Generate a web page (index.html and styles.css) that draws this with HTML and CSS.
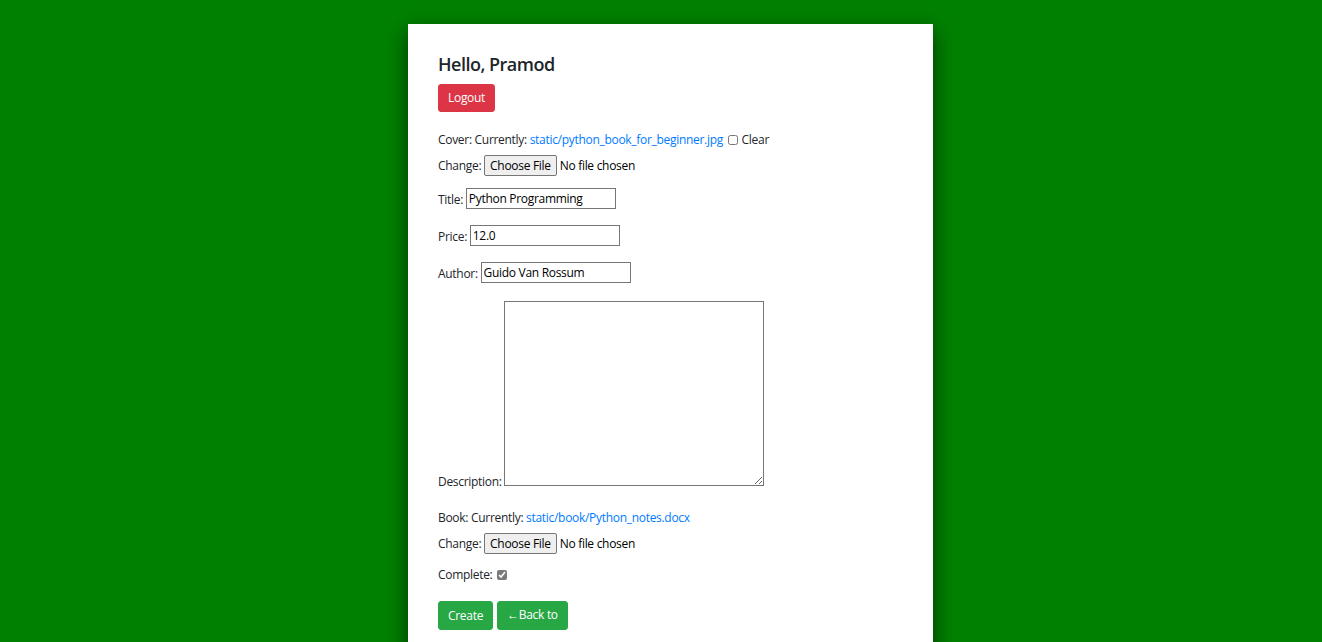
FILE: index.html
```html
<!DOCTYPE html>
<html lang="en">
<head>
<meta charset="utf-8">
<title>Edit book</title>
<link rel="stylesheet" href="styles.css">
</head>
<body>
<div class="card">
  <h4 class="greet">Hello, Pramod</h4>
  <a class="btn btn-red" href="#">Logout</a>
  <form class="form">
    <p class="row">Cover: Currently: <a class="link" href="#">static/python_book_for_beginner.jpg</a> <input class="check" type="checkbox" id="clear"> <label for="clear">Clear</label><br>
    Change: <input class="file" type="file"></p>
    <p class="row">Title: <input class="text" type="text" value="Python Programming"></p>
    <p class="row">Price: <input class="text" type="text" value="12.0"></p>
    <p class="row">Author: <input class="text" type="text" value="Guido Van Rossum"></p>
    <p class="row desc">Description: <textarea class="area"></textarea></p>
    <p class="row">Book: Currently: <a class="link" href="#">static/book/Python_notes.docx</a><br>
    Change: <input class="file" type="file"></p>
    <p class="row">Complete: <input class="check done" type="checkbox" checked></p>
    <div class="actions">
      <button class="btn btn-green" type="button">Create</button>
      <a class="btn btn-green" href="#">&larr;Back to</a>
    </div>
  </form>
</div>
</body>
</html>
```

FILE: styles.css
```css
html, body {
  margin: 0;
  padding: 0;
}
body {
  background: #008000;
  padding-left: 19px;
  font-family: "Open Sans", "Noto Sans", sans-serif;
  font-size: 12px;
  line-height: 18px;
  letter-spacing: -0.3px;
  color: #212529;
  overflow: hidden;
}
.card {
  width: 465px;
  margin: 24px auto 0;
  padding: 30px 30px 40px;
  background: #fff;
  box-shadow: 0 8px 20px rgba(0, 0, 0, 0.6);
  min-height: 600px;
}
.greet {
  margin: 0 0 9px;
  font-size: 18px;
  line-height: 21px;
  font-weight: 600;
  letter-spacing: -0.5px;
  color: #212529;
}
.btn {
  display: inline-block;
  box-sizing: border-box;
  height: 28px;
  padding: 4px 9px;
  border: 1px solid transparent;
  border-radius: 3px;
  font-family: inherit;
  font-size: 12px;
  line-height: 18px;
  letter-spacing: -0.3px;
  color: #fff;
  text-decoration: none;
  vertical-align: middle;
  cursor: pointer;
}
.btn-red {
  background: #dc3545;
  border-color: #dc3545;
}
.btn-green {
  background: #28a745;
  border-color: #28a745;
  height: 29px;
}
.form {
  margin-top: 19px;
}
.row {
  margin: 0 0 12px;
}
.link {
  color: #007bff;
  text-decoration: none;
}
.check {
  width: 10px;
  height: 10px;
  margin: 0 1px 0 2px;
  vertical-align: -1px;
}
.done {
  accent-color: #7a7a7a;
}
.text {
  box-sizing: border-box;
  width: 150px;
  height: 21px;
  margin: 0 0 4px;
  padding: 1px 2px;
  border: 1px solid #767676;
  border-radius: 0;
  font-family: inherit;
  font-size: 12px;
  letter-spacing: -0.3px;
  color: #000;
  vertical-align: middle;
}
.file {
  margin: 6px 0 0;
  font-family: inherit;
  font-size: 12px;
  letter-spacing: -0.3px;
  color: #000;
  vertical-align: baseline;
}
.file::file-selector-button {
  font-family: inherit;
  font-size: 12px;
  letter-spacing: -0.3px;
  height: 21px;
  padding: 0 5px;
  margin-right: 3px;
  background: #efefef;
  border: 1px solid #767676;
  border-radius: 2px;
  color: #000;
}
.area {
  box-sizing: border-box;
  width: 260px;
  height: 185px;
  margin: 2px 0 0;
  border: 1px solid #767676;
  border-radius: 0;
  vertical-align: baseline;
}
.desc {
  margin-bottom: 18px;
}
.actions {
  margin-top: 17px;
  display: flex;
  gap: 4px;
}
```
